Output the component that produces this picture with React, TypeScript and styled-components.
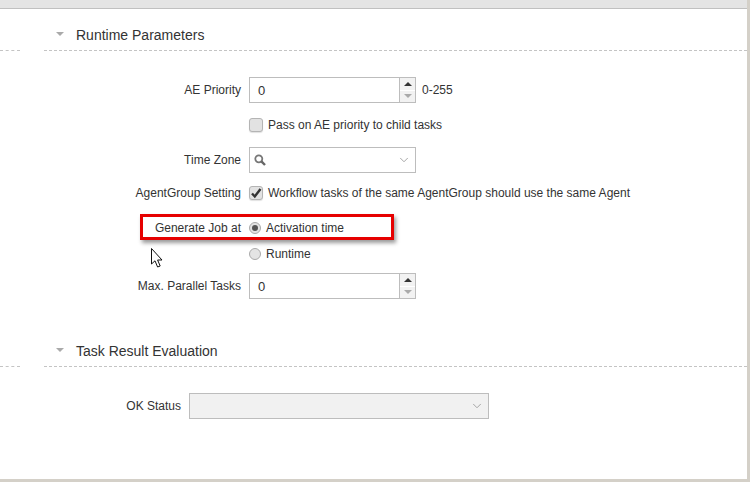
import React, { FC } from 'react';
import styled, { createGlobalStyle } from 'styled-components';
import { ChevronDown } from 'lucide-react';

const GlobalStyle = createGlobalStyle`
  html, body {
    margin: 0;
    padding: 0;
    background: #fff;
  }
`;

const Window = styled.div`
  position: relative;
  box-sizing: border-box;
  width: 750px;
  height: 482px;
  overflow: hidden;
  background: #fff;
  border-right: 3px solid #d4d0c8;
  border-bottom: 3px solid #d4d0c8;
  font-family: 'Liberation Sans', Arial, sans-serif;
  font-size: 12px;
  color: #333;
`;

const TopBar = styled.div`
  height: 8px;
  background: #e4e4e4;
  border-bottom: 1px solid #c0c0c0;
`;

const SectionHead = styled.div<{ $top: number }>`
  display: flex;
  align-items: flex-end;
  height: 41px;
  margin-top: ${(props) => props.$top}px;
`;

const LeftStub = styled.div`
  width: 20px;
  margin-right: 24px;
  border-bottom: 1px dashed #c4c4c4;
`;

const HeadLine = styled.div`
  flex: 1;
  display: flex;
  align-items: center;
  box-sizing: content-box;
  height: 30px;
  padding: 2px 0 0 12px;
  border-bottom: 1px dashed #c4c4c4;
`;

const Caret = styled.div`
  width: 0;
  height: 0;
  margin: 0 12px 2px 0;
  border-left: 4px solid transparent;
  border-right: 4px solid transparent;
  border-top: 4px solid #aaa;
`;

const HeadTitle = styled.div`
  font-size: 14px;
  line-height: 16px;
  color: #333;
`;

const Form = styled.div<{ $top: number; $labelWidth: number }>`
  display: grid;
  grid-template-columns: ${(props) => props.$labelWidth}px 1fr;
  column-gap: 8px;
  margin-top: ${(props) => props.$top}px;
`;

const Label = styled.div<{ $height: number }>`
  height: ${(props) => props.$height}px;
  line-height: ${(props) => props.$height}px;
  text-align: right;
  white-space: nowrap;
`;

const Field = styled.div<{ $height: number }>`
  display: flex;
  align-items: center;
  height: ${(props) => props.$height}px;
  white-space: nowrap;
`;

const InputBox = styled.div<{ $width: number; $disabled?: boolean }>`
  box-sizing: border-box;
  display: flex;
  align-items: center;
  width: ${(props) => props.$width}px;
  height: 26px;
  border: 1px solid #bdbdbd;
  background: ${(props) => (props.$disabled ? '#f1f1f1' : '#fff')};
`;

const NumberValue = styled.div`
  flex: 1;
  padding-left: 8px;
  font-size: 13px;
`;

const Spinner = styled.div`
  display: flex;
  flex-direction: column;
  width: 15px;
  height: 100%;
  border-left: 1px solid #bdbdbd;
`;

const SpinButton = styled.div<{ $down?: boolean }>`
  flex: 1;
  display: flex;
  align-items: center;
  justify-content: center;
  background: #f2f2f2;
  border-top: ${(props) => (props.$down ? '1px solid #fff' : 'none')};

  &::after {
    content: '';
    width: 0;
    height: 0;
    border-left: 4px solid transparent;
    border-right: 4px solid transparent;
    ${(props) =>
      props.$down ? 'border-top: 4px solid #aaa;' : 'border-bottom: 4px solid #333;'}
  }
`;

const Hint = styled.span`
  margin-left: 6px;
`;

const CheckBox = styled.div`
  box-sizing: border-box;
  display: flex;
  align-items: center;
  justify-content: center;
  width: 14px;
  height: 14px;
  margin-right: 5px;
  border: 1px solid #b4b4b4;
  border-radius: 3px;
  background: #e2e2e2;
  box-shadow: 0 1px 1px rgba(0, 0, 0, 0.12);
`;

const RadioDot = styled.div<{ $checked?: boolean }>`
  box-sizing: border-box;
  display: flex;
  align-items: center;
  justify-content: center;
  width: 12px;
  height: 12px;
  margin-right: 5px;
  border: 1px solid #aaa;
  border-radius: 50%;
  background: #e4e4e4;

  &::after {
    content: '';
    display: ${(props) => (props.$checked ? 'block' : 'none')};
    width: 6px;
    height: 6px;
    border-radius: 50%;
    background: #555;
  }
`;

const SearchIcon = styled.svg`
  margin-left: 4px;
`;

const SelectArrow = styled(ChevronDown)`
  margin-left: auto;
  margin-right: 4px;
  color: #999;
`;

const Highlight = styled.div`
  position: absolute;
  left: 140px;
  top: 214px;
  box-sizing: border-box;
  width: 254px;
  height: 26px;
  border: 3px solid #e60000;
  box-shadow: 2px 3px 4px rgba(0, 0, 0, 0.4);
`;

const Cursor = styled.svg`
  position: absolute;
  left: 151px;
  top: 248px;
`;

const Stepper: FC = () => (
  <Spinner>
    <SpinButton />
    <SpinButton $down />
  </Spinner>
);

const App: FC = () => (
  <>
    <GlobalStyle />
    <Window>
      <TopBar />
      <SectionHead $top={1}>
        <LeftStub />
        <HeadLine>
          <Caret />
          <HeadTitle>Runtime Parameters</HeadTitle>
        </HeadLine>
      </SectionHead>

      <Form $top={26} $labelWidth={241}>
        <Label $height={26}>AE Priority</Label>
        <Field $height={26}>
          <InputBox $width={167}>
            <NumberValue>0</NumberValue>
            <Stepper />
          </InputBox>
          <Hint>0-255</Hint>
        </Field>

        <Label $height={44} />
        <Field $height={44}>
          <CheckBox />
          Pass on AE priority to child tasks
        </Field>

        <Label $height={26}>Time Zone</Label>
        <Field $height={26}>
          <InputBox $width={167}>
            <SearchIcon width="12" height="12" viewBox="0 0 12 12">
              <circle cx="4.8" cy="4.8" r="3.5" fill="none" stroke="#777" strokeWidth="1.8" />
              <path d="M7.4 7.4 L11 11" stroke="#666" strokeWidth="2.4" />
            </SearchIcon>
            <SelectArrow size={14} strokeWidth={1.5} />
          </InputBox>
        </Field>

        <Label $height={40}>AgentGroup Setting</Label>
        <Field $height={40}>
          <CheckBox>
            <svg width="12" height="12" viewBox="0 0 12 12">
              <path d="M2 6.5 L4.8 9.5 L10.5 2" fill="none" stroke="#333" strokeWidth="2.4" />
            </svg>
          </CheckBox>
          Workflow tasks of the same AgentGroup should use the same Agent
        </Field>

        <Label $height={30}>Generate Job at</Label>
        <Field $height={30}>
          <RadioDot $checked />
          Activation time
        </Field>

        <Label $height={22} />
        <Field $height={22}>
          <RadioDot />
          Runtime
        </Field>

        <Label $height={42}>Max. Parallel Tasks</Label>
        <Field $height={42}>
          <InputBox $width={167}>
            <NumberValue>0</NumberValue>
            <Stepper />
          </InputBox>
        </Field>
      </Form>

      <SectionHead $top={19}>
        <LeftStub />
        <HeadLine>
          <Caret />
          <HeadTitle>Task Result Evaluation</HeadTitle>
        </HeadLine>
      </SectionHead>

      <Form $top={26} $labelWidth={181}>
        <Label $height={26}>OK Status</Label>
        <Field $height={26}>
          <InputBox $width={300} $disabled>
            <SelectArrow size={14} strokeWidth={1.5} />
          </InputBox>
        </Field>
      </Form>

      <Highlight />
      <Cursor width="14" height="22" viewBox="0 0 14 22">
        <path
          d="M0.5 0.5 L0.5 16 L4 12.8 L6.6 19 L9.2 18 L6.6 12 L11 12 Z"
          fill="#fff"
          stroke="#111"
          strokeWidth="1"
        />
      </Cursor>
    </Window>
  </>
);

export default App;
